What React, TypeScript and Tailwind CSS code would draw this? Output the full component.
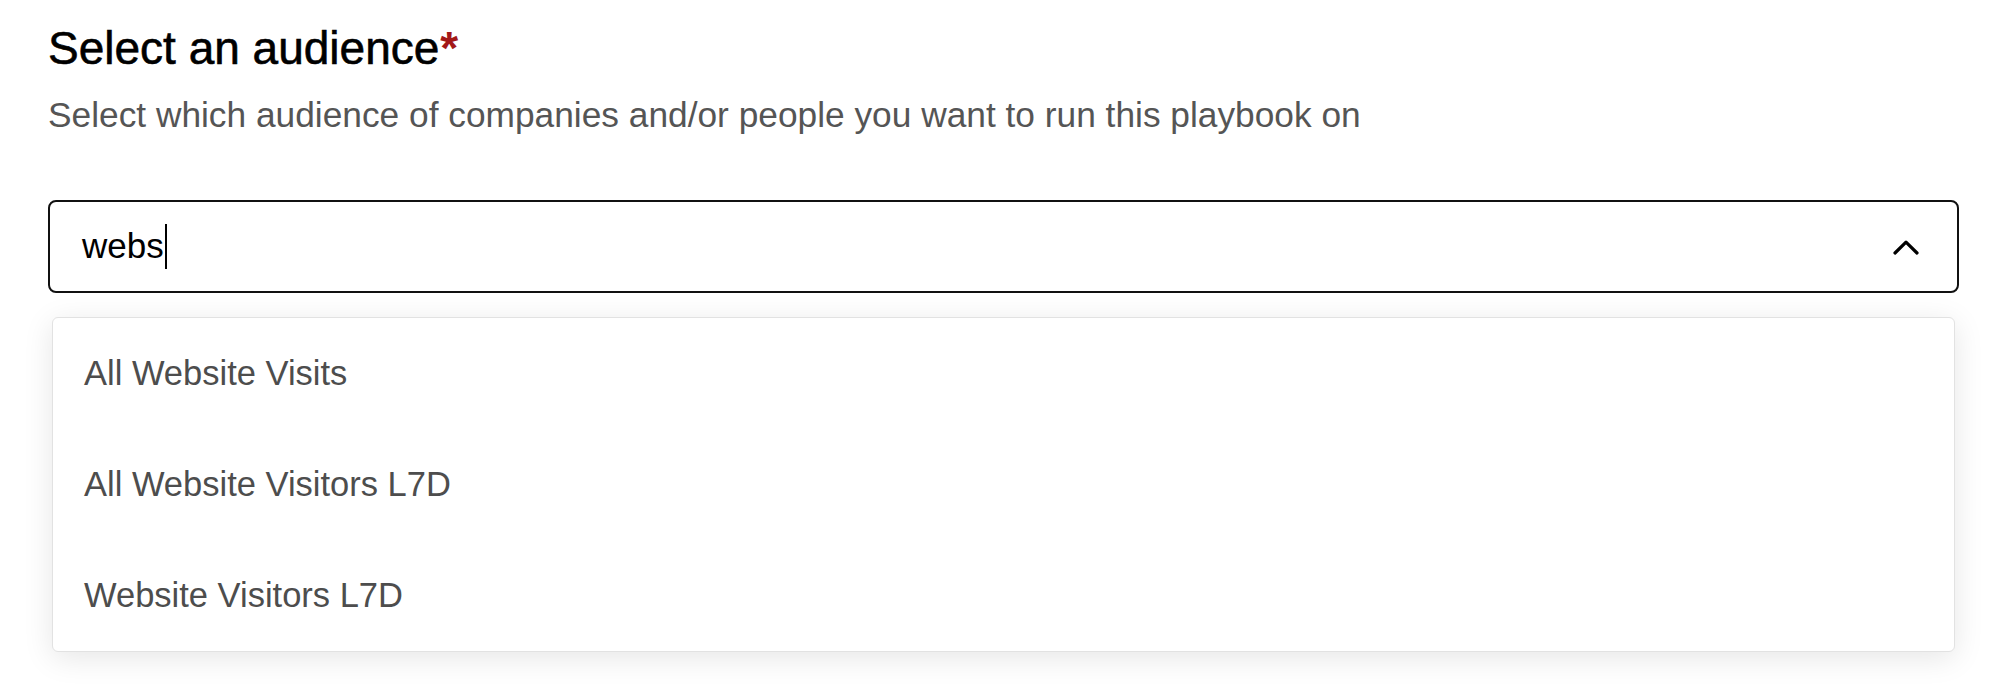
const options = ["All Website Visits", "All Website Visitors L7D", "Website Visitors L7D"];

export default function App() {
  return (
    <div className="min-h-screen bg-white pl-[48px] pt-[20px] font-['Liberation_Sans',Arial,sans-serif]">
      {/* Header */}
      <h1 className="text-[46px] leading-[56px] text-black [-webkit-text-stroke:0.6px_black]">
        Select an audience
        <span className="ml-[1px] font-bold text-[#a31818] [-webkit-text-stroke:0px]">*</span>
      </h1>
      <p className="mt-[17px] text-[35.3px] leading-[44px] text-[#555]">
        Select which audience of companies and/or people you want to run this playbook on
      </p>

      {/* Combobox */}
      <div className="mt-[63px] w-[1911px]">
        <div className="flex h-[93px] items-center justify-between rounded-[8px] border-2 border-[#111] pl-[32px] pr-[38px]">
          <div className="flex items-center text-[35px] text-black">
            <span>webs</span>
            <span className="ml-[1px] h-[45px] w-[2px] bg-black" />
          </div>
          <svg width="26" height="15" viewBox="0 0 26 15" fill="none" className="mt-[1px]">
            <polyline
              points="2,13 13,2.2 24,13"
              stroke="#000"
              strokeWidth="3.2"
              strokeLinecap="round"
              strokeLinejoin="round"
            />
          </svg>
        </div>

        {/* Options */}
        <div className="mx-[4px] mt-[24px] rounded-[6px] border border-[#e2e2e2] bg-white shadow-[0_6px_30px_rgba(0,0,0,0.10)]">
          {options.map((opt) => (
            <div key={opt} className="flex h-[111px] items-center px-[31px] text-[34.5px] text-[#4d4d4d]">
              {opt}
            </div>
          ))}
        </div>
      </div>
    </div>
  );
}
